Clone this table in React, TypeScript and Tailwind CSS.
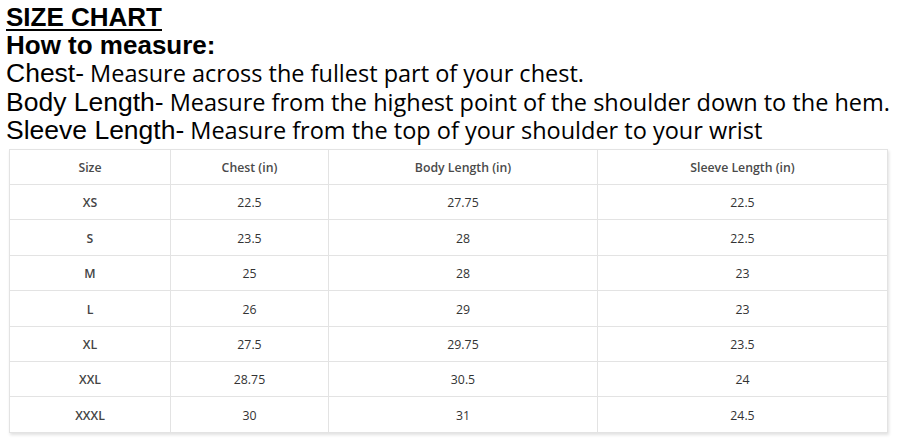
const rows = [
  ["XS", "22.5", "27.75", "22.5"],
  ["S", "23.5", "28", "22.5"],
  ["M", "25", "28", "23"],
  ["L", "26", "29", "23"],
  ["XL", "27.5", "29.75", "23.5"],
  ["XXL", "28.75", "30.5", "24"],
  ["XXXL", "30", "31", "24.5"],
];

const headers = ["Size", "Chest (in)", "Body Length (in)", "Sleeve Length (in)"];

function Line({ label, text }: { label: string; text: string }) {
  return (
    <div className="flex items-baseline h-[28.5px] whitespace-nowrap text-black">
      <span className="inline-block h-[28.5px] leading-[28.5px] text-[26.5px] font-['Liberation_Sans',sans-serif]">
        {label}
      </span>
      <span className="inline-block h-[28.5px] leading-[28.5px] ml-[6px] text-[23.5px] font-['Open_Sans',sans-serif]">
        {text}
      </span>
    </div>
  );
}

export default function App() {
  return (
    <div className="w-[898px] h-[444px] bg-white overflow-hidden pl-[6px] pt-[3px]">
      <div className="font-['Liberation_Sans',sans-serif] font-bold text-[26px] leading-[28px] text-black underline underline-offset-[3px] decoration-[2px]">
        SIZE CHART
      </div>
      <div className="font-['Liberation_Sans',sans-serif] font-bold text-[26px] leading-[28px] text-black">
        How to measure:
      </div>
      <Line label="Chest-" text="Measure across the fullest part of your chest." />
      <Line label="Body Length-" text="Measure from the highest point of the shoulder down to the hem." />
      <Line label="Sleeve Length-" text="Measure from the top of your shoulder to your wrist" />

      <div className="mt-[4px] ml-[3px] w-[879px] shadow-[1px_2px_3px_rgba(0,0,0,0.12)]">
        <table className="w-full border-collapse font-['Open_Sans',sans-serif] text-[12.3px] text-[#333]">
          <colgroup>
            <col className="w-[161px]" />
            <col className="w-[158px]" />
            <col className="w-[269px]" />
            <col className="w-[290px]" />
          </colgroup>
          <thead>
            <tr className="h-[35.5px]">
              {headers.map((h) => (
                <th key={h} className="border border-[#e3e3e3] font-semibold text-[#4a4a4a] text-center pt-[3px]">
                  {h}
                </th>
              ))}
            </tr>
          </thead>
          <tbody>
            {rows.map((r) => (
              <tr key={r[0]} className="h-[35.4px]">
                {r.map((c, i) => (
                  <td
                    key={i}
                    className={`border border-[#e3e3e3] text-center pt-[3px] ${i === 0 ? "font-semibold text-[#444]" : ""}`}
                  >
                    {c}
                  </td>
                ))}
              </tr>
            ))}
          </tbody>
        </table>
      </div>
    </div>
  );
}
